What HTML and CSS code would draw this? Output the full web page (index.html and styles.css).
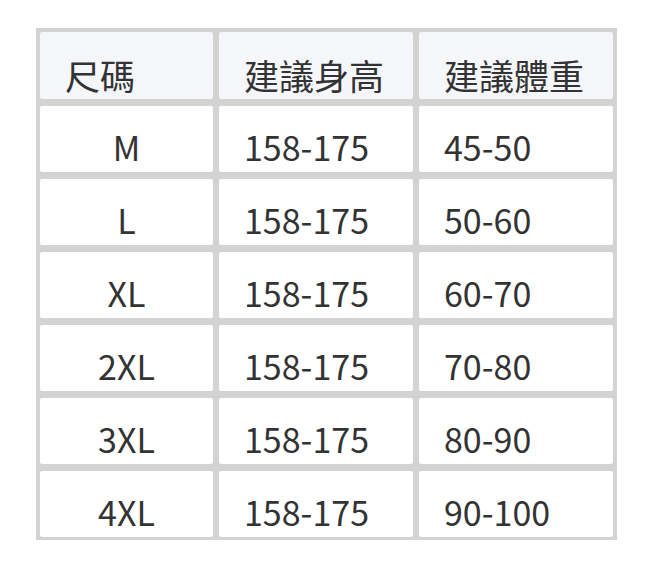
FILE: index.html
```html
<!DOCTYPE html>
<html lang="zh-Hant">
<head>
<meta charset="utf-8">
<title>尺碼表</title>
<link rel="stylesheet" href="styles.css">
</head>
<body>
<div class="size-table">
  <div class="cell head first">尺碼</div>
  <div class="cell head">建議身高</div>
  <div class="cell head">建議體重</div>

  <div class="cell first">M</div>
  <div class="cell">158-175</div>
  <div class="cell">45-50</div>

  <div class="cell first">L</div>
  <div class="cell">158-175</div>
  <div class="cell">50-60</div>

  <div class="cell first">XL</div>
  <div class="cell">158-175</div>
  <div class="cell">60-70</div>

  <div class="cell first">2XL</div>
  <div class="cell">158-175</div>
  <div class="cell">70-80</div>

  <div class="cell first">3XL</div>
  <div class="cell">158-175</div>
  <div class="cell">80-90</div>

  <div class="cell first">4XL</div>
  <div class="cell">158-175</div>
  <div class="cell">90-100</div>
</div>
</body>
</html>
```

FILE: styles.css
```css
html, body {
  margin: 0;
  padding: 0;
  background: #ffffff;
}

body {
  padding: 28px 0 0 36px;
  font-family: "Noto Sans CJK TC", "Noto Sans", sans-serif;
  color: #333333;
}

.size-table {
  width: 573px;
  display: grid;
  grid-template-columns: 173px 194px 194px;
  grid-template-rows: 67px repeat(6, 66px);
  column-gap: 6px;
  row-gap: 7px;
  padding: 4px 4px 3px 4px;
  background: #d3d3d3;
}

.cell {
  background: #ffffff;
  border-radius: 2px;
  display: flex;
  align-items: flex-end;
  justify-content: flex-start;
  padding: 0 0 8px 25px;
  font-size: 34px;
  line-height: 1;
  box-sizing: border-box;
}

.cell.first {
  justify-content: center;
  padding-left: 0;
}

.cell.head {
  background: #f5f6fa;
  font-size: 35px;
  padding-bottom: 7px;
}

.cell.head.first {
  justify-content: flex-start;
  padding-left: 25px;
}
```
